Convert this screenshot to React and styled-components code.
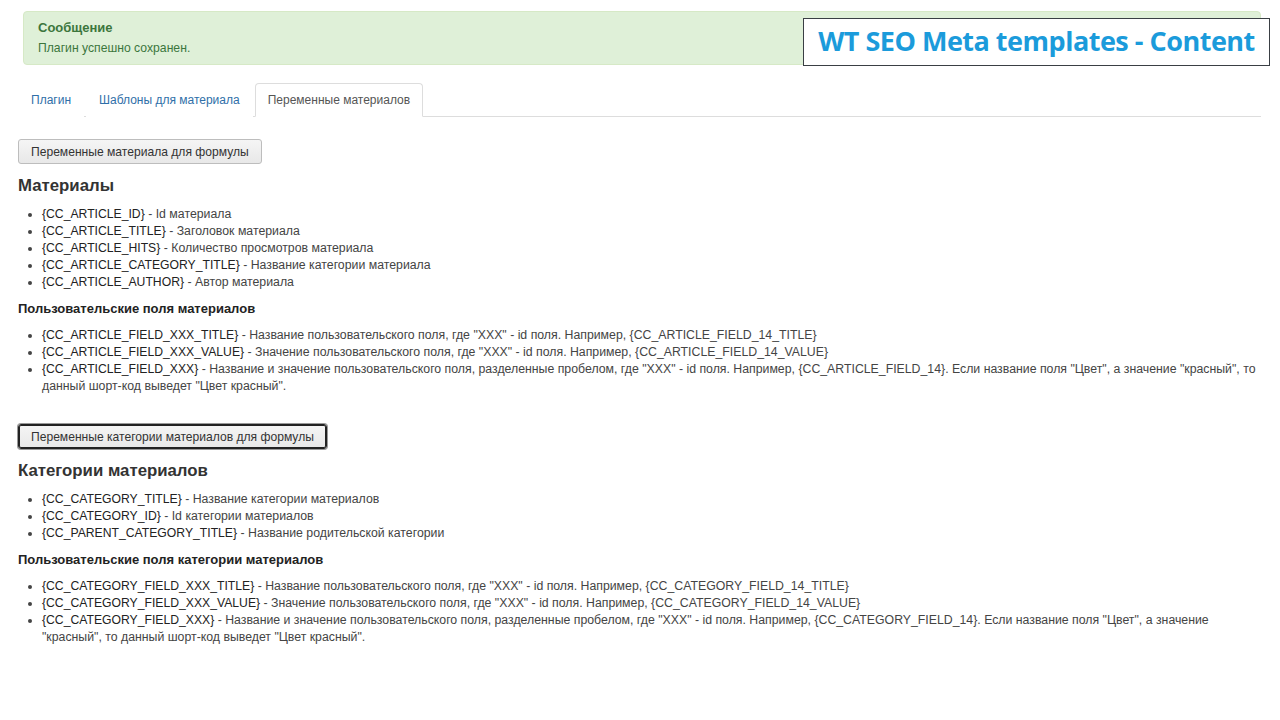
import React from "react";
import styled, { createGlobalStyle } from "styled-components";

const GlobalStyle = createGlobalStyle`
  body {
    margin: 0;
    background: #fff;
    font-family: "Liberation Sans", Arial, sans-serif;
    color: #333;
  }
`;

const Page = styled.div`
  position: relative;
  width: 1280px;
  height: 720px;
  padding: 11px 19px 0 18px;
  box-sizing: border-box;
`;

const Alert = styled.div`
  margin-left: 5px;
  height: 54px;
  box-sizing: border-box;
  padding: 8px 14px;
  background: #dff0d8;
  border: 1px solid #d6e9c6;
  border-radius: 4px;
  color: #3c763d;
`;

const AlertTitle = styled.div`
  font-size: 13px;
  font-weight: bold;
  line-height: 15px;
`;

const AlertText = styled.div`
  margin-top: 6px;
  font-size: 12.2px;
  line-height: 14px;
`;

const Badge = styled.div`
  position: absolute;
  top: 18px;
  left: 803px;
  width: 467px;
  height: 48px;
  box-sizing: border-box;
  border: 1.5px solid #3a3f44;
  background: #fff;
  display: flex;
  align-items: center;
  justify-content: center;
  padding-bottom: 3px;
  font-family: "Open Sans", sans-serif;
  font-weight: 700;
  font-size: 27px;
  letter-spacing: -0.5px;
  color: #1b9bdb;
`;

const Tabs = styled.ul`
  display: flex;
  list-style: none;
  margin: 18px 0 0;
  padding: 0;
  border-bottom: 1px solid #ddd;
  height: 33px;
`;

const Tab = styled.li`
  margin-bottom: -1px;
  margin-right: ${(p) => (p.$active ? 0 : "2px")};
  padding: 0 12px;
  line-height: 32px;
  font-size: 12px;
  color: ${(p) => (p.$active ? "#555" : "#2f6fa8")};
  background: #fff;
  border: 1px solid ${(p) => (p.$active ? "#ddd" : "transparent")};
  border-bottom-color: ${(p) => (p.$active ? "#fff" : "transparent")};
  border-radius: 4px 4px 0 0;
`;

const Button = styled.button`
  display: block;
  height: 25px;
  padding: 0 12px;
  font-family: "Liberation Sans", Arial, sans-serif;
  font-size: 12.1px;
  color: #333;
  background: linear-gradient(#f5f5f5, #e8e8e8);
  border-style: solid;
  border-radius: 3px;
  box-shadow: ${(p) => (p.$focused ? "0 0 0 1px #222 inset, 0 0 0 1px #999" : "none")};
  border-color: ${(p) => (p.$focused ? "#222" : "#bdbdbd")};
  border-width: ${(p) => (p.$focused ? "1.5px" : "1px")};
`;

const Section = styled.section`
  margin-top: ${(p) => p.$top}px;
`;

const Heading = styled.h3`
  margin: 12px 0 0;
  font-size: 16.8px;
  line-height: 20px;
  font-weight: bold;
  color: #333;
`;

const SubHeading = styled.h4`
  margin: 9px 0 0;
  font-size: 13px;
  line-height: 17px;
  font-weight: bold;
  color: #222;
`;

const List = styled.ul`
  margin: 10px 0 0;
  padding-left: 24px;
  font-size: 12.3px;
  line-height: 17px;
  color: #444;
  max-width: 1236px;
`;

const Code = styled.span`
  color: #222;
  font-size: 12.2px;
`;

const Item = ({ code, children }) => (
  <li>
    <Code>{code}</Code> - {children}
  </li>
);

export default function App() {
  return (
    <>
      <GlobalStyle />
      <Page>
        <Alert>
          <AlertTitle>Сообщение</AlertTitle>
          <AlertText>Плагин успешно сохранен.</AlertText>
        </Alert>
        <Badge>WT SEO Meta templates - Content</Badge>

        <Tabs>
          <Tab>Плагин</Tab>
          <Tab>Шаблоны для материала</Tab>
          <Tab $active>Переменные материалов</Tab>
        </Tabs>

        <Section $top={22}>
          <Button>Переменные материала для формулы</Button>
          <Heading>Материалы</Heading>
          <List>
            <Item code="{CC_ARTICLE_ID}">Id материала</Item>
            <Item code="{CC_ARTICLE_TITLE}">Заголовок материала</Item>
            <Item code="{CC_ARTICLE_HITS}">Количество просмотров материала</Item>
            <Item code="{CC_ARTICLE_CATEGORY_TITLE}">Название категории материала</Item>
            <Item code="{CC_ARTICLE_AUTHOR}">Автор материала</Item>
          </List>
          <SubHeading>Пользовательские поля материалов</SubHeading>
          <List>
            <Item code="{CC_ARTICLE_FIELD_XXX_TITLE}">
              Название пользовательского поля, где "XXX" - id поля. Например, {"{CC_ARTICLE_FIELD_14_TITLE}"}
            </Item>
            <Item code="{CC_ARTICLE_FIELD_XXX_VALUE}">
              Значение пользовательского поля, где "XXX" - id поля. Например, {"{CC_ARTICLE_FIELD_14_VALUE}"}
            </Item>
            <Item code="{CC_ARTICLE_FIELD_XXX}">
              Название и значение пользовательского поля, разделенные пробелом, где "XXX" - id поля. Например,{" "}
              {"{CC_ARTICLE_FIELD_14}"}. Если название поля "Цвет", а значение "красный", то данный шорт-код выведет "Цвет красный".
            </Item>
          </List>
        </Section>

        <Section $top={29}>
          <Button $focused>Переменные категории материалов для формулы</Button>
          <Heading>Категории материалов</Heading>
          <List>
            <Item code="{CC_CATEGORY_TITLE}">Название категории материалов</Item>
            <Item code="{CC_CATEGORY_ID}">Id категории материалов</Item>
            <Item code="{CC_PARENT_CATEGORY_TITLE}">Название родительской категории</Item>
          </List>
          <SubHeading>Пользовательские поля категории материалов</SubHeading>
          <List>
            <Item code="{CC_CATEGORY_FIELD_XXX_TITLE}">
              Название пользовательского поля, где "XXX" - id поля. Например, {"{CC_CATEGORY_FIELD_14_TITLE}"}
            </Item>
            <Item code="{CC_CATEGORY_FIELD_XXX_VALUE}">
              Значение пользовательского поля, где "XXX" - id поля. Например, {"{CC_CATEGORY_FIELD_14_VALUE}"}
            </Item>
            <Item code="{CC_CATEGORY_FIELD_XXX}">
              Название и значение пользовательского поля, разделенные пробелом, где "XXX" - id поля. Например,{" "}
              {"{CC_CATEGORY_FIELD_14}"}. Если название поля "Цвет", а значение "красный", то данный шорт-код выведет "Цвет красный".
            </Item>
          </List>
        </Section>
      </Page>
    </>
  );
}
